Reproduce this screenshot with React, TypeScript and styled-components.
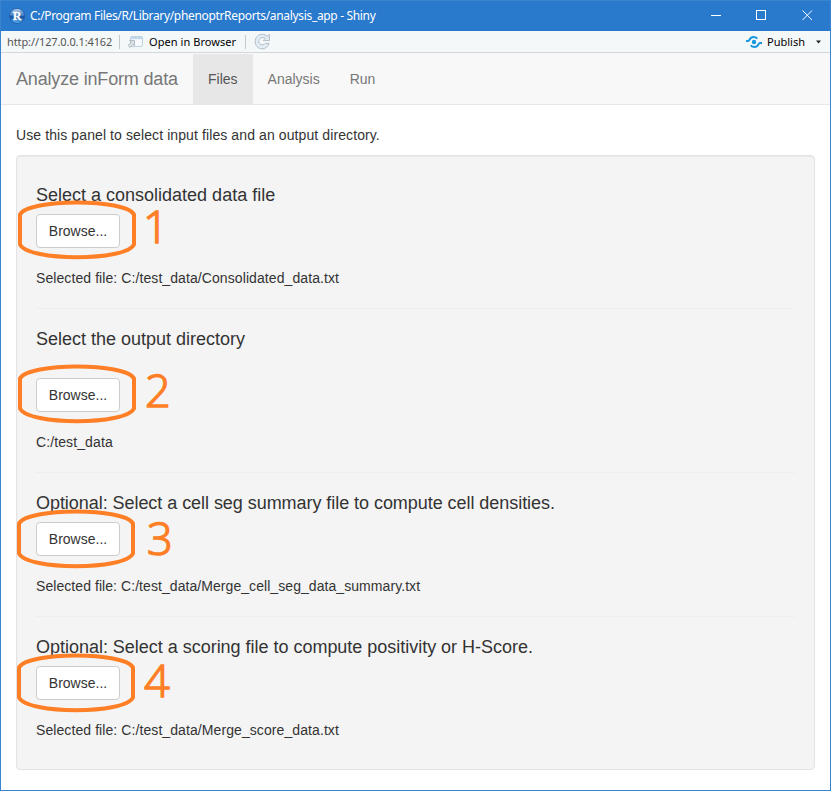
import React from "react";
import styled, { createGlobalStyle } from "styled-components";

const GlobalStyle = createGlobalStyle`
  * { box-sizing: border-box; }
  body { margin: 0; background: #fff; }
`;

const systemFont = `"Noto Sans", "Open Sans", sans-serif`;

const Window = styled.div`
  width: 831px;
  height: 791px;
  display: flex;
  flex-direction: column;
  overflow: hidden;
  border: 1px solid #3a84cf;
  background: #fff;
  color: #333;
  font: 14px/20px "Liberation Sans", Arial, sans-serif;
`;

const TitleBar = styled.header`
  height: 30px;
  flex: none;
  display: flex;
  align-items: center;
  padding-left: 8px;
  background: #2979cd;
  color: #fff;
  font: 12px/16px ${systemFont};
`;

const TitleText = styled.span`
  margin-left: 5px;
  flex: 1;
  white-space: nowrap;
  letter-spacing: -0.33px;
`;

const Controls = styled.svg`
  display: block;
  flex: none;
`;

const Toolbar = styled.div`
  height: 22px;
  flex: none;
  display: flex;
  align-items: center;
  padding: 0 9px 0 6px;
  background: #f4f8f9;
  border-bottom: 1px solid #d3d8db;
  color: #000;
  font: 11px/14px ${systemFont};
  white-space: nowrap;
  svg { flex: none; display: block; }
`;

const Label = styled.span<{ $w: number; $spacing?: number; $color?: string }>`
  width: ${(p) => p.$w}px;
  letter-spacing: ${(p) => p.$spacing ?? 0}px;
  color: ${(p) => p.$color ?? "#000"};
`;

const Separator = styled.i`
  width: 1px;
  height: 14px;
  margin: 0 7px;
  background: #c5c9cc;
`;

const Spacer = styled.div`
  flex: 1;
`;

const Gap = styled.div<{ $w?: number }>`
  width: ${(p) => p.$w ?? 6}px;
  flex: none;
`;

const Navbar = styled.nav`
  height: 52px;
  flex: none;
  display: flex;
  padding-top: 1px;
  background: #f8f8f8;
  border-bottom: 1px solid #e7e7e7;
  line-height: 50px;
  color: #777;
`;

const Brand = styled.div`
  width: 192px;
  padding-left: 15px;
  font-size: 18px;
  letter-spacing: -0.17px;
  white-space: nowrap;
`;

const Tab = styled.div<{ $active?: boolean }>`
  padding: 0 15px;
  background: ${(p) => (p.$active ? "#e7e7e7" : "transparent")};
  color: ${(p) => (p.$active ? "#555" : "#777")};
`;

const Content = styled.main`
  padding: 20px 15px 0;
`;

const Intro = styled.p`
  margin: 0 0 10px;
  letter-spacing: 0.1px;
`;

const Well = styled.div`
  height: 615px;
  padding: 29px 19px 0;
  border: 1px solid #e3e3e3;
  border-radius: 4px;
  background: #f4f4f4;
  box-shadow: inset 0 1px 1px rgba(0, 0, 0, 0.05);
`;

const Section = styled.section`
  & + & {
    margin-top: 20px;
    padding-top: 20px;
    border-top: 1px solid #eee;
  }
`;

const Heading = styled.h4<{ $spacing: number }>`
  margin: 0;
  font-size: 18px;
  font-weight: 500;
  line-height: 20px;
  letter-spacing: ${(p) => p.$spacing}px;
`;

const ButtonRow = styled.div<{ $gap: number }>`
  position: relative;
  margin: ${(p) => p.$gap}px 0 20px;
`;

const Browse = styled.button`
  display: block;
  width: 84px;
  height: 34px;
  padding: 0;
  border: 1px solid #ccc;
  border-radius: 4px;
  background: #fff;
  color: #333;
  font: 14px/20px "Liberation Sans", Arial, sans-serif;
`;

const FilePath = styled.div<{ $spacing: number }>`
  letter-spacing: ${(p) => p.$spacing}px;
`;

const Ring = styled.svg<{ $dx: number; $dy: number }>`
  position: absolute;
  left: ${(p) => -18 + p.$dx}px;
  top: ${(p) => -14 + p.$dy}px;
  pointer-events: none;
`;

const StepNumber = styled.span<{ $x: number; $dy: number }>`
  position: absolute;
  left: ${(p) => p.$x}px;
  top: ${(p) => -5 + p.$dy}px;
  color: #ff7f27;
  font: 300 45px/34px "Open Sans", sans-serif;
  -webkit-text-stroke: 1.5px #ff7f27;
`;

const sections = [
  { title: "Select a consolidated data file", path: "Selected file: C:/test_data/Consolidated_data.txt", gap: 9, ring: [0, 0], num: [107, 0], hs: 0, ps: 0.085 },
  { title: "Select the output directory", path: "C:/test_data", gap: 29, ring: [0, 0], num: [109, 0], hs: 0, ps: 0.11 },
  { title: "Optional: Select a cell seg summary file to compute cell densities.", path: "Selected file: C:/test_data/Merge_cell_seg_data_summary.txt", gap: 9, ring: [-1, 1], num: [111, 4], hs: -0.05, ps: 0.065 },
  { title: "Optional: Select a scoring file to compute positivity or H-Score.", path: "Selected file: C:/test_data/Merge_score_data.txt", gap: 9, ring: [-1, 1], num: [108, 2], hs: -0.02, ps: 0.085 },
];

const AppIcon = () => (
  <svg width="16" height="16" viewBox="0 0 16 16">
    <defs>
      <linearGradient id="ball" x1="0" y1="0" x2="0" y2="1">
        <stop offset="0" stopColor="#b4cfec" />
        <stop offset="0.45" stopColor="#4680c2" />
        <stop offset="0.55" stopColor="#164f9d" />
        <stop offset="1" stopColor="#4fb0f5" />
      </linearGradient>
    </defs>
    <circle cx="8" cy="8" r="7.6" fill="url(#ball)" stroke="#1b56a2" strokeWidth="0.7" />
    <text x="8" y="11.5" textAnchor="middle" fontFamily="Liberation Serif, serif" fontWeight="bold" fontSize="12" fill="#fff" stroke="#fff" strokeWidth="0.3">R</text>
  </svg>
);

const OpenIcon = () => (
  <svg width="16" height="14" viewBox="0 0 16 14">
    <rect x="3.5" y="1.5" width="12" height="10" rx="1.5" fill="#f8fbfe" stroke="#bdd2e2" />
    <path d="M4 2h11v2.2H4z" fill="#c3d9eb" />
    <path d="M2.5 5.5H7.5V10.5L5.9 9.2 3 12.4 1.1 10.5 4.1 7.3z" fill="#dfe4e7" stroke="#aab4bb" strokeWidth="0.9" />
  </svg>
);

const RefreshIcon = () => (
  <svg width="17" height="17" viewBox="0 0 17 17">
    <path
      d="M13.2 3.3 15.4 1.4V7.6H9.2L11.3 5.3C8.1 3.3 4.8 5.3 4.8 8.5S8.4 13.2 11.6 10.4H15.1C13.9 14 11.2 15.8 8.2 15.8 4.2 15.8 1.2 12.7 1.2 8.6S4.1 1.3 8.2 1.3C10.2 1.3 11.9 2 13.2 3.3Z"
      fill="#e3edf6" stroke="#b3bdc8" strokeWidth="1"
    />
  </svg>
);

const PublishIcon = () => (
  <svg width="16" height="12" viewBox="0 0 16 12" fill="none" stroke="#1896e1" strokeWidth="2">
    <circle cx="8" cy="6" r="2.2" fill="#1896e1" stroke="none" />
    <path d="M0 5H2.3C3.6 5 3.6 1 7.5 1C9.3 1 10.4 1.6 11.3 2.6" />
    <path d="M16 7H13.7C12.4 7 12.4 11 8.5 11C6.7 11 5.6 10.4 4.7 9.4" />
  </svg>
);

export default function App() {
  return (
    <>
      <GlobalStyle />
      <Window>
        <TitleBar>
          <AppIcon />
          <TitleText>C:/Program Files/R/Library/phenoptrReports/analysis_app - Shiny</TitleText>
          <Controls width="119" height="30" viewBox="0 0 119 30" fill="none" stroke="#fff">
            <path d="M0 14.5H10" />
            <rect x="45.5" y="9.5" width="9" height="9" />
            <path d="M91.5 9.5 101 19M101 9.5 91.5 19" />
          </Controls>
        </TitleBar>
        <Toolbar>
          <Label $w={105} $spacing={-0.1} $color="#555">http://127.0.0.1:4162</Label>
          <Separator />
          <OpenIcon />
          <Gap />
          <Label $w={89} $spacing={0.06}>Open in Browser</Label>
          <Separator />
          <Gap $w={1} />
          <RefreshIcon />
          <Spacer />
          <PublishIcon />
          <Gap $w={5} />
          <Label $w={49}>Publish</Label>
          <svg width="5" height="4" viewBox="0 0 5 4"><path d="M0 .5H5L2.5 3.5Z" fill="#222" /></svg>
        </Toolbar>
        <Navbar>
          <Brand>Analyze inForm data</Brand>
          <Tab $active>Files</Tab>
          <Tab>Analysis</Tab>
          <Tab>Run</Tab>
        </Navbar>
        <Content>
          <Intro>Use this panel to select input files and an output directory.</Intro>
          <Well>
            {sections.map((s, i) => (
              <Section key={s.title}>
                <Heading $spacing={s.hs}>{s.title}</Heading>
                <ButtonRow $gap={s.gap}>
                  <Browse>Browse...</Browse>
                  <Ring $dx={s.ring[0]} $dy={s.ring[1]} width="118" height="60" viewBox="0 0 118 60">
                    <path
                      d="M2 14.5C10 -1.5 108 -1.5 116 14.5V44.5C108 61.5 10 61.5 2 44.5Z"
                      fill="none" stroke="#ff7f27" strokeWidth="4" strokeLinejoin="round"
                    />
                  </Ring>
                  <StepNumber $x={s.num[0]} $dy={s.num[1]}>{i + 1}</StepNumber>
                </ButtonRow>
                <FilePath $spacing={s.ps}>{s.path}</FilePath>
              </Section>
            ))}
          </Well>
        </Content>
      </Window>
    </>
  );
}
